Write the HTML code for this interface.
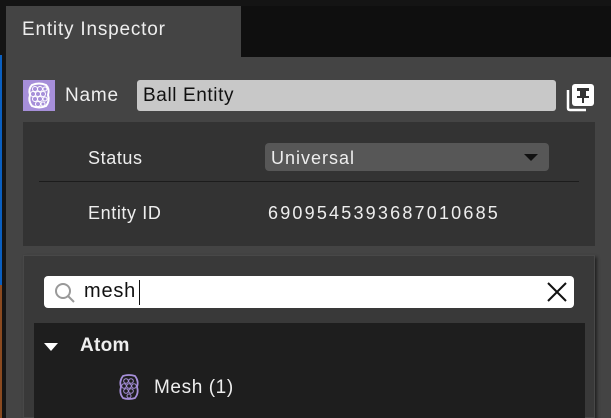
<!DOCTYPE html><html><head><style>
body{margin:0;width:611px;height:418px;background:#141414;overflow:hidden;position:relative;font-family:"Liberation Sans",sans-serif;color:#eee}
div{position:absolute;box-sizing:border-box;white-space:nowrap}
</style></head><body>
<div style="left:0;top:55px;width:2px;height:230px;background:#0a5fc0"></div>
<div style="left:0;top:285px;width:2px;height:133px;background:#8a4a20"></div>
<div style="left:6px;top:6px;width:605px;height:412px;background:#444"></div>
<div style="left:241px;top:6px;width:370px;height:51px;background:#0f0f0f"></div>
<div style="left:22px;top:19px;font-size:19px;letter-spacing:0.8px;color:#eee">Entity Inspector</div>
<div style="left:23px;top:80px;width:32px;height:31px;background:#a68fd9">
<svg width="32" height="31" viewBox="0 0 32 31"><path d="M9 5 Q16 2 23 5 Q27 9 25 15 Q27 21 23 26 Q16 29 9 26 Q5 21 7 15 Q5 9 9 5Z" fill="none" stroke="#fff" stroke-width="2"/><g fill="none" stroke="#fff" stroke-width="1"><circle cx="12" cy="9" r="2.5"/><circle cx="17" cy="9" r="2.5"/><circle cx="22" cy="9" r="2"/><circle cx="10" cy="14" r="2.5"/><circle cx="15" cy="14" r="2.5"/><circle cx="20" cy="14" r="2.5"/><circle cx="12" cy="19" r="2.5"/><circle cx="17" cy="19" r="2.5"/><circle cx="22" cy="19" r="2"/><circle cx="15" cy="24" r="2.5"/><circle cx="20" cy="24" r="2"/></g></svg></div>
<div style="left:65px;top:85px;font-size:19px;letter-spacing:0.8px;color:#eee">Name</div>
<div style="left:137px;top:80px;width:419px;height:31px;background:#c8c8c8;border-radius:3px"></div>
<div style="left:143px;top:85px;font-size:19px;letter-spacing:0.6px;color:#111">Ball Entity</div>
<svg style="position:absolute;left:566px;top:82px" width="30" height="30" viewBox="0 0 30 30"><path d="M2 8 V26 Q2 28 4 28 H20" fill="none" stroke="#fff" stroke-width="2.5"/><rect x="6" y="2" width="22" height="22" rx="3" fill="#fff"/><path d="M11 6 H23 V9 H20 V14 H23 V16 H18 V21 H16 V16 H11 V14 H14 V9 H11Z" fill="#333"/></svg>
<div style="left:23px;top:122px;width:572px;height:124px;background:#333"></div>
<div style="left:39px;top:181px;width:540px;height:1px;background:#1c1c1c"></div>
<div style="left:88px;top:148px;font-size:18px;letter-spacing:0.6px">Status</div>
<div style="left:265px;top:143px;width:284px;height:28px;background:#575757;border-radius:4px"></div>
<div style="left:271px;top:148px;font-size:18px;letter-spacing:1px">Universal</div>
<div style="left:524px;top:154px;width:0;height:0;border-left:7px solid transparent;border-right:7px solid transparent;border-top:7px solid #111"></div>
<div style="left:88px;top:203px;font-size:18px;letter-spacing:0.6px">Entity ID</div>
<div style="left:268px;top:203px;font-size:18px;letter-spacing:2.2px">6909545393687010685</div>
<div style="left:23px;top:255px;width:572px;height:163px;background:#393939;border:1px solid #484848;box-shadow:2px 2px 3px #222"></div>
<div style="left:44px;top:276px;width:530px;height:32px;background:#fff;border-radius:4px"></div>
<svg style="position:absolute;left:53px;top:281px" width="24" height="24" viewBox="0 0 24 24"><circle cx="10" cy="10" r="7" fill="none" stroke="#999" stroke-width="2"/><path d="M15 15 L21 21" stroke="#999" stroke-width="2"/></svg>
<div style="left:84px;top:280px;font-size:20px;letter-spacing:0.8px;color:#111">mesh</div>
<div style="left:139px;top:280px;width:1px;height:25px;background:#111"></div>
<svg style="position:absolute;left:546px;top:281px" width="22" height="22" viewBox="0 0 22 22"><path d="M2 2 L20 20 M20 2 L2 20" stroke="#111" stroke-width="2"/></svg>
<div style="left:34px;top:323px;width:551px;height:95px;background:#1e1e1e"></div>
<div style="left:44px;top:343px;width:0;height:0;border-left:7px solid transparent;border-right:7px solid transparent;border-top:8px solid #fff"></div>
<div style="left:80px;top:335px;font-size:19px;font-weight:bold;letter-spacing:0.3px">Atom</div>
<svg style="position:absolute;left:118px;top:374px" width="22" height="26" viewBox="0 0 22 26"><path d="M5 2 Q11 0 17 2 Q21 7 19 13 Q21 19 17 24 Q11 26 5 24 Q1 19 3 13 Q1 7 5 2Z" fill="none" stroke="#a68fd9" stroke-width="1.8"/><g fill="none" stroke="#a68fd9" stroke-width="1"><circle cx="8" cy="7" r="2.3"/><circle cx="13" cy="7" r="2.3"/><circle cx="6" cy="12" r="2.3"/><circle cx="11" cy="12" r="2.3"/><circle cx="16" cy="12" r="2.3"/><circle cx="8" cy="17" r="2.3"/><circle cx="13" cy="17" r="2.3"/><circle cx="11" cy="22" r="2"/></g></svg>
<div style="left:154px;top:377px;font-size:19px;letter-spacing:0.6px">Mesh (1)</div>
</body></html>
